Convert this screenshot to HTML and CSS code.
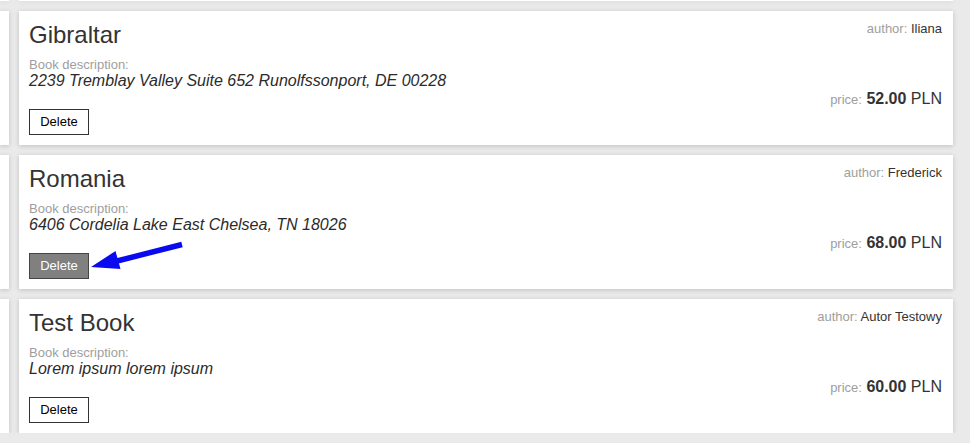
FILE: index.html
```html
<!DOCTYPE html>
<html lang="en">
<head>
<meta charset="utf-8">
<title>Books</title>
<link rel="stylesheet" href="styles.css">
</head>
<body>
<div class="grid">
  <div class="side stub"></div>
  <div class="card stub"></div>

  <div class="side"></div>
  <div class="card">
    <div class="main">
      <h2 class="title">Gibraltar</h2>
      <div class="label">Book description:</div>
      <div class="desc">2239 Tremblay Valley Suite 652 Runolfssonport, DE 00228</div>
      <button class="btn">Delete</button>
    </div>
    <div class="meta">
      <div class="author"><span class="muted">author:</span> Iliana</div>
      <div class="price"><span class="muted small">price:</span> <b>52.00</b> PLN</div>
    </div>
  </div>

  <div class="side"></div>
  <div class="card">
    <div class="main">
      <h2 class="title">Romania</h2>
      <div class="label">Book description:</div>
      <div class="desc">6406 Cordelia Lake East Chelsea, TN 18026</div>
      <button class="btn hover">Delete</button>
    </div>
    <div class="meta">
      <div class="author"><span class="muted">author:</span> Frederick</div>
      <div class="price"><span class="muted small">price:</span> <b>68.00</b> PLN</div>
    </div>
    <svg class="arrow" width="934" height="134" viewBox="0 0 934 134">
      <line x1="163" y1="89.5" x2="98" y2="106" stroke="#0a0af0" stroke-width="5.5"/>
      <polygon points="72,112 96.5,96 101.5,114" fill="#0a0af0"/>
    </svg>
  </div>

  <div class="side"></div>
  <div class="card">
    <div class="main">
      <h2 class="title">Test Book</h2>
      <div class="label">Book description:</div>
      <div class="desc">Lorem ipsum lorem ipsum</div>
      <button class="btn">Delete</button>
    </div>
    <div class="meta">
      <div class="author"><span class="muted">author:</span> Autor Testowy</div>
      <div class="price"><span class="muted small">price:</span> <b>60.00</b> PLN</div>
    </div>
  </div>
</div>
</body>
</html>
```
FILE: styles.css
```css
html, body {
  margin: 0;
  padding: 0;
}
body {
  background: #eaeaea;
  font-family: "Liberation Sans", Arial, sans-serif;
  color: #333;
  overflow: hidden;
}
.grid {
  display: grid;
  grid-template-columns: 9px 934px;
  grid-auto-rows: 134px;
  grid-template-rows: 1px;
  column-gap: 10px;
  row-gap: 10px;
}
.side, .card {
  background: #fff;
  box-shadow: 0 1px 5px rgba(0, 0, 0, 0.18);
}
.card {
  position: relative;
  display: flex;
  justify-content: space-between;
  padding: 10px 11px 11px 10px;
  box-sizing: border-box;
}
.stub {
  padding: 0;
}
.title {
  margin: 0;
  font-size: 24px;
  font-weight: normal;
  line-height: 28px;
  color: #333;
}
.label {
  margin-top: 8px;
  font-size: 13px;
  line-height: 15px;
  color: #9e9e9e;
}
.desc {
  font-size: 16px;
  line-height: 18px;
  font-style: italic;
  color: #2b2b2b;
}
.btn {
  display: block;
  margin-top: 19px;
  padding: 4px 10px;
  font-family: "Liberation Sans", Arial, sans-serif;
  font-size: 13px;
  line-height: 16px;
  background: #fff;
  color: #000;
  border: 1px solid #333;
  border-radius: 0;
  width: 60px;
  box-sizing: border-box;
  height: 26px;
}
.btn.hover {
  background: #808080;
  color: #fff;
  border-color: #444;
}
.meta {
  text-align: right;
}
.author {
  font-size: 13px;
  line-height: 15px;
  color: #333;
}
.muted {
  color: #9e9e9e;
}
.price {
  margin-top: 54px;
  font-size: 16px;
  line-height: 18px;
  color: #333;
}
.price .small {
  font-size: 13px;
}
.price b {
  font-weight: bold;
}
.arrow {
  position: absolute;
  left: 0;
  top: 0;
  pointer-events: none;
  overflow: visible;
}
```
